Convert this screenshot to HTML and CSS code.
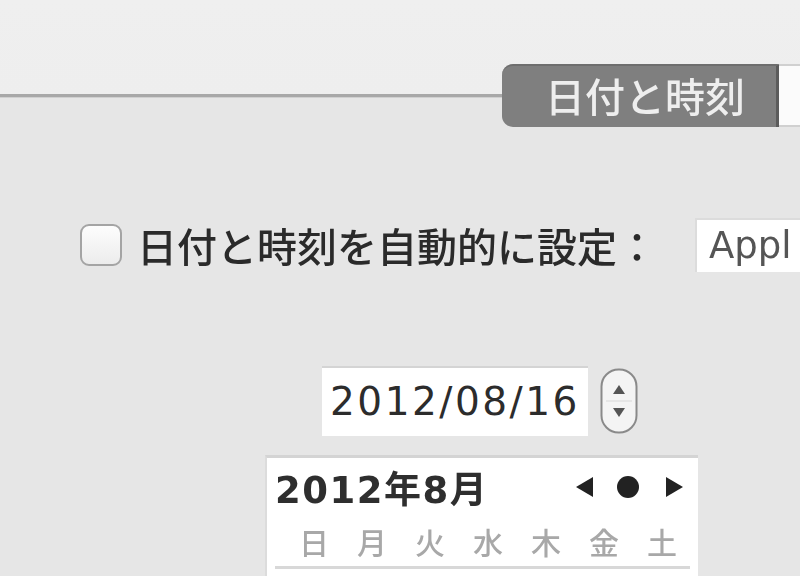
FILE: index.html
```html
<!DOCTYPE html>
<html lang="ja">
<head>
<meta charset="utf-8">
<link rel="stylesheet" href="styles.css">
</head>
<body>
<div class="page">
  <div class="tabrow">
    <div class="rule"></div>
    <div class="tab active">日付と時刻</div>
    <div class="tab next"></div>
  </div>

  <div class="setting">
    <span class="checkbox"></span>
    <span class="label">日付と時刻を自動的に設定：</span>
    <span class="server">Appl</span>
  </div>

  <div class="daterow">
    <div class="datefield">2012/08/16</div>
    <div class="stepper">
      <svg width="38" height="66" viewBox="0 0 38 66">
        <rect x="1.5" y="1.5" width="35" height="63" rx="17" fill="#f4f4f4" stroke="#8a8a8a" stroke-width="2"/>
        <line x1="6" y1="33" x2="32" y2="33" stroke="#d8d8d8" stroke-width="1"/>
        <path d="M19 17 L25 26 L13 26 Z" fill="#555"/>
        <path d="M19 49 L25 40 L13 40 Z" fill="#555"/>
      </svg>
    </div>
  </div>

  <div class="calendar">
    <div class="calhead">
      <span class="month">2012年8月</span>
      <span class="nav">
        <svg width="112" height="24" viewBox="0 0 112 24">
          <path d="M2 12 L19 2 L19 22 Z" fill="#222"/>
          <circle cx="54" cy="12" r="11" fill="#222"/>
          <path d="M109 12 L92 2 L92 22 Z" fill="#222"/>
        </svg>
      </span>
    </div>
    <div class="weekdays">
      <span>日</span><span>月</span><span>火</span><span>水</span><span>木</span><span>金</span><span>土</span>
    </div>
  </div>
</div>
</body>
</html>
```

FILE: styles.css
```css
html, body {
  margin: 0;
  padding: 0;
}
body {
  width: 800px;
  height: 576px;
  overflow: hidden;
  background: linear-gradient(#efefef 0, #eeeeee 95px, #e6e6e6 96px, #e6e6e6 100%);
  font-family: "DejaVu Sans", "Noto Sans CJK JP", sans-serif;
  color: #333;
}
.page {
  filter: blur(0.7px);
}
.tabrow {
  display: flex;
  align-items: center;
  height: 63px;
  margin-top: 64px;
}
.rule {
  width: 502px;
  height: 3px;
  background: #a8a8a8;
  box-shadow: 0 1px 0 #d0d0d0;
}
.tab {
  height: 63px;
  box-sizing: border-box;
}
.tab.active {
  width: 277px;
  background: #7f7f7f;
  border-radius: 11px 0 0 11px;
  border-top: 2px solid #6e6e6e;
  border-right: 3px solid #5c5c5c;
  color: #eeeeee;
  font-family: "Noto Sans CJK JP", sans-serif;
  font-weight: 500;
  font-size: 40px;
  line-height: 58px;
  padding-left: 43px;
}
.tab.next {
  flex: 1;
  background: #fbfbfb;
  border-top: 2px solid #d0d0d0;
  border-bottom: 2px solid #d0d0d0;
}
.setting {
  display: flex;
  align-items: center;
  margin-top: 91px;
  height: 54px;
  padding-left: 80px;
}
.checkbox {
  width: 42px;
  height: 42px;
  box-sizing: border-box;
  border: 2px solid #a4a4a4;
  border-radius: 9px;
  background: linear-gradient(#fdfdfd, #ececec);
}
.label {
  margin-left: 15px;
  font-family: "Noto Sans CJK JP", sans-serif;
  font-weight: 500;
  font-size: 40px;
  color: #2a2a2a;
}
.server {
  margin-left: auto;
  width: 105px;
  height: 54px;
  box-sizing: border-box;
  background: #fff;
  border-top: 2px solid #dcdcdc;
  border-left: 2px solid #dcdcdc;
  padding-left: 12px;
  font-size: 37px;
  line-height: 52px;
  color: #555;
  white-space: nowrap;
  overflow: hidden;
}
.daterow {
  display: flex;
  align-items: center;
  margin-top: 94px;
  padding-left: 322px;
  height: 70px;
}
.datefield {
  width: 266px;
  height: 70px;
  box-sizing: border-box;
  background: #fff;
  border-top: 2px solid #d4d4d4;
  padding-left: 8px;
  font-size: 39px;
  letter-spacing: 2.5px;
  line-height: 68px;
  color: #2c2c2c;
}
.stepper {
  margin-left: 12px;
  height: 66px;
}
.stepper svg {
  display: block;
}
.calendar {
  margin-top: 19px;
  margin-left: 265px;
  width: 433px;
  height: 140px;
  box-sizing: border-box;
  background: #fff;
  border-top: 3px solid #d4d4d4;
  border-left: 2px solid #dcdcdc;
  padding: 0 8px;
}
.calhead {
  display: flex;
  align-items: center;
  justify-content: space-between;
  height: 58px;
}
.month {
  font-size: 37px;
  font-weight: bold;
  color: #2e2e2e;
  letter-spacing: 1.5px;
}
.nav svg {
  display: block;
  margin-right: 4px;
}
.weekdays {
  display: grid;
  grid-template-columns: repeat(7, 58px);
  padding-left: 10px;
  height: 50px;
  align-items: center;
  border-bottom: 3px solid #d8d8d8;
  font-family: "Noto Sans CJK JP", sans-serif;
  font-weight: 500;
  font-size: 30px;
  color: #a8a8a8;
}
.weekdays span {
  text-align: center;
}
```
